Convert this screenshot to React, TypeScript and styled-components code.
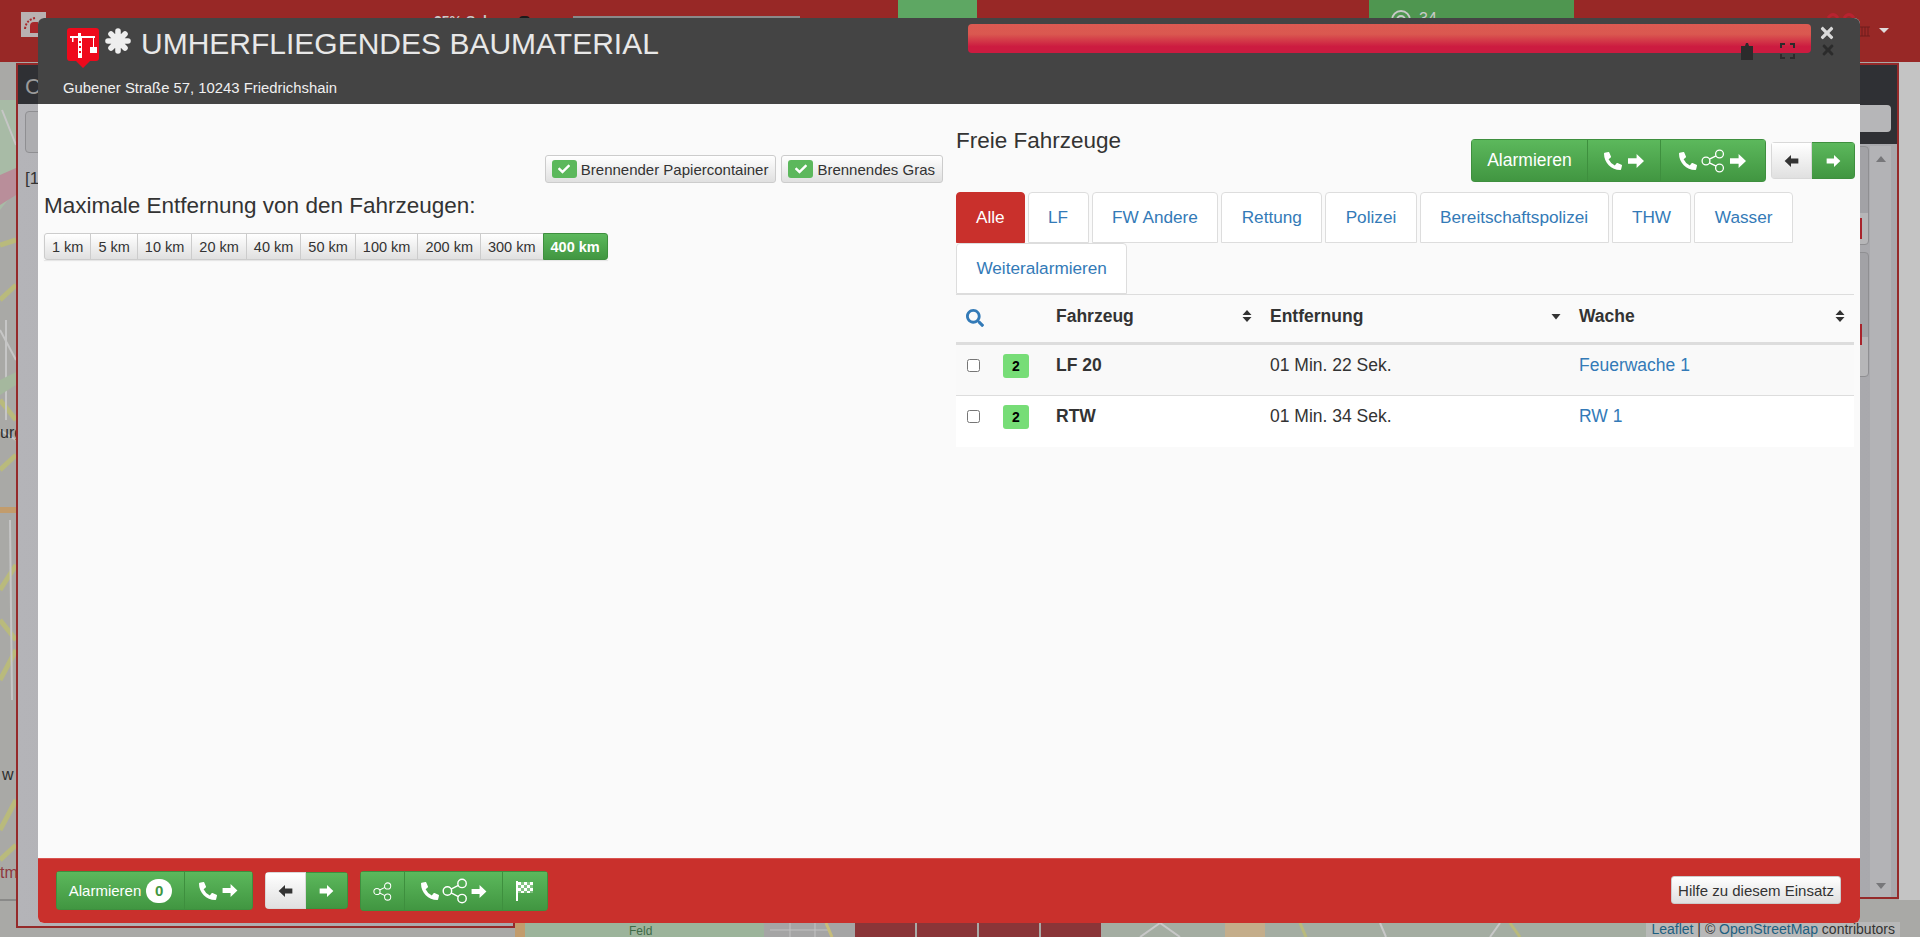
import React from 'react';
import styled, { createGlobalStyle } from 'styled-components';
import { FaCheck, FaPhoneAlt, FaSearch, FaTimes } from 'react-icons/fa';

const GlobalStyle = createGlobalStyle`
  html, body {
    margin: 0;
    padding: 0;
    background: #c4c4c4;
    font-family: "Liberation Sans", Arial, sans-serif;
    font-size: 14px;
    color: #333;
  }
  * { box-sizing: border-box; }
`;

const GREEN = 'linear-gradient(to bottom, #5cb85c 0%, #419641 100%)';
const GREY = 'linear-gradient(to bottom, #ffffff 0%, #e0e0e0 100%)';

const Page = styled.div`
  position: relative;
  width: 1920px;
  height: 937px;
  overflow: hidden;
  background: #c4c4c4;
`;

/* ---- dimmed page behind the modal ---- */
const TopBar = styled.div`
  position: relative;
  z-index: 1;
  display: flex;
  align-items: flex-start;
  height: 62px;
  background: #982826;
`;
const BrandBox = styled.div`
  width: 25px;
  height: 25px;
  margin: 12px 0 0 21px;
  background: #b9b1b1;
  display: flex;
  align-items: center;
  justify-content: center;
`;
const TopText = styled.div`
  margin: 13px 0 0 388px;
  width: 85px;
  font-size: 14px;
  font-weight: 700;
  color: #c9c9c9;
  white-space: nowrap;
`;
const TopRing = styled.div`
  width: 11px;
  height: 16px;
  margin-top: 16px;
  border: 2px solid #1a1a1a;
  border-radius: 4px;
`;
const TopInput = styled.div`
  width: 227px;
  height: 30px;
  margin: 16px 0 0 43px;
  background: #8a8a8a;
`;
const TopGreen = styled.div<{ $ml: number; $w: number; $bg: string }>`
  width: ${(p) => p.$w}px;
  height: 62px;
  margin-left: ${(p) => p.$ml}px;
  background: ${(p) => p.$bg};
  display: flex;
  gap: 8px;
  padding: 10px 0 0 22px;
  color: #c9c9c9;
  font-size: 16px;
`;
const MapLayer = styled.svg`
  position: absolute;
  left: 0;
  top: 0;
  display: block;
`;
const SidePanel = styled.div<{ $left: number; $top: number; $w: number; $h: number }>`
  position: absolute;
  left: ${(p) => p.$left}px;
  top: ${(p) => p.$top}px;
  width: ${(p) => p.$w}px;
  height: ${(p) => p.$h}px;
  border: 2px solid #952a2a;
  background: linear-gradient(to right, #b4b4b8, #a8a8ac);
  overflow: hidden;
`;
const PanelHead = styled.div<{ $h: number }>`
  height: ${(p) => p.$h}px;
  background: #2f3034;
  padding: 9px 7px;
  color: #9a9a9a;
  font-size: 22px;
  display: flex;
  justify-content: space-between;
`;
const PanelButton = styled.div`
  width: 80px;
  height: 42px;
  margin: 7px 0 0 7px;
  border: 1px solid #8f8f92;
  border-radius: 4px;
  background: #adadb0;
`;
const PanelText = styled.div`
  margin: 16px 0 0 7px;
  font-size: 17px;
  color: #333;
`;
const HeadInput = styled.div`
  align-self: flex-end;
  margin-left: auto;
  width: 300px;
  height: 27px;
  margin-bottom: 3px;
  margin-right: -1px;
  border-radius: 4px;
  background: #b6b6b8;
`;
const RightList = styled.div`
  display: flex;
  justify-content: flex-end;
  gap: 1px;
  padding: 2px 6px 0 0;
  height: calc(100% - 79px);
`;
const ListColumn = styled.div`
  width: 120px;
  display: flex;
  flex-direction: column;
  gap: 7px;
`;
const ListCard = styled.div<{ $h: number }>`
  position: relative;
  height: ${(p) => p.$h}px;
  border: 1px solid #8f8f92;
  border-radius: 4px;
  background: linear-gradient(to bottom, #a2a2a6 0 68%, #b6b6b8 68% 100%);
  &::after {
    content: '';
    position: absolute;
    right: 6px;
    top: 71px;
    width: 2px;
    height: 21px;
    background: #a8242c;
  }
`;
const ScrollTrack = styled.div`
  width: 21px;
  background: #b3b3b6;
  display: flex;
  flex-direction: column;
  justify-content: space-between;
  align-items: center;
  padding: 10px 0 8px;
`;
const ScrollArrow = styled.div<{ $down?: boolean }>`
  width: 0;
  height: 0;
  border-left: 5px solid transparent;
  border-right: 5px solid transparent;
  ${(p) => (p.$down ? 'border-top: 6px solid #77777a;' : 'border-bottom: 6px solid #77777a;')}
`;
const MapButtons = styled.div`
  position: absolute;
  left: 855px;
  top: 900px;
  display: flex;
  gap: 2px;
`;
const MapButton = styled.div`
  width: 60px;
  height: 37px;
  background: #8a3538;
`;
const Attribution = styled.div`
  position: absolute;
  right: 20px;
  top: 922px;
  height: 15px;
  padding: 0 5px;
  background: rgba(190, 190, 190, 0.75);
  font-size: 14px;
  line-height: 15px;
  color: #333;
  white-space: nowrap;
  a { color: #1d5f80; text-decoration: none; }
`;

/* ---- modal ---- */
const Modal = styled.div`
  position: absolute;
  left: 38px;
  top: 18px;
  width: 1822px;
  height: 905px;
  z-index: 5;
  display: flex;
  flex-direction: column;
  border-radius: 6px;
  overflow: hidden;
  background: #fafafa;
`;
const Header = styled.div`
  position: relative;
  height: 86px;
  flex: none;
  background: #444444;
  color: #fff;
  padding: 10px 0 0 29px;
`;
const TitleRow = styled.div`
  display: flex;
  align-items: flex-start;
  height: 40px;
`;
const Title = styled.h1`
  margin: -1px 0 0 10px;
  font-size: 30px;
  line-height: 34px;
  font-weight: 400;
  color: #e8e8e8;
  white-space: nowrap;
`;
const Address = styled.div`
  margin: 10px 0 0 -4px;
  font-size: 14.85px;
  line-height: 20px;
  color: #f0f0f0;
`;
const ProgressBar = styled.div`
  position: absolute;
  left: 930px;
  top: 6px;
  width: 843px;
  height: 29px;
  border-radius: 4px;
  background: linear-gradient(to bottom, #dc5a52 0%, #da5850 35%, #cc1b40 78%, #cc1b40 100%);
`;
const HeaderIcon = styled.span<{ $x: number; $y: number; $c: string }>`
  position: absolute;
  left: ${(p) => p.$x}px;
  top: ${(p) => p.$y}px;
  color: ${(p) => p.$c};
  display: flex;
`;
const Body = styled.div`
  flex: 1;
  display: flex;
`;
const LeftColumn = styled.div`
  width: 905px;
  padding: 51px 0 0 6px;
`;
const TagRow = styled.div`
  display: flex;
  justify-content: flex-end;
  gap: 5px;
`;
const TagButton = styled.button`
  height: 28px;
  padding: 0 7px 0 6px;
  display: flex;
  align-items: center;
  gap: 4px;
  border: 1px solid #ccc;
  border-radius: 3px;
  background: ${GREY};
  font: 15px "Liberation Sans", Arial, sans-serif;
  color: #333;
  white-space: nowrap;
`;
const CheckLabel = styled.span`
  width: 25px;
  height: 18px;
  border-radius: 3px;
  background: #5cb85c;
  color: #fff;
  display: flex;
  align-items: center;
  justify-content: center;
  font-size: 12px;
`;
const DistanceHeading = styled.h3`
  margin: 9px 0 0;
  font-size: 22.5px;
  line-height: 28px;
  font-weight: 400;
  color: #333;
`;
const DistanceGroup = styled.div`
  display: inline-flex;
  margin-top: 13px;
  box-shadow: 0 1px 1px rgba(0, 0, 0, 0.08);
`;
const DistanceButton = styled.button<{ $active?: boolean }>`
  height: 27px;
  padding: 0 7px;
  margin-left: -1px;
  border: 1px solid ${(p) => (p.$active ? '#3e8f3e' : '#ccc')};
  background: ${(p) => (p.$active ? GREEN : GREY)};
  color: ${(p) => (p.$active ? '#fff' : '#333')};
  font: ${(p) => (p.$active ? 700 : 400)} 14.5px "Liberation Sans", Arial, sans-serif;
  white-space: nowrap;
  &:first-child { margin-left: 0; border-radius: 3px 0 0 3px; }
  &:last-child { border-radius: 0 3px 3px 0; }
`;
const RightColumn = styled.div`
  width: 898px;
  margin-left: 13px;
`;
const RightHead = styled.div`
  height: 88px;
  display: flex;
  justify-content: space-between;
  align-items: flex-start;
`;
const SectionTitle = styled.h3`
  margin: 24px 0 0;
  font-size: 22.5px;
  line-height: 26px;
  font-weight: 400;
  color: #333;
`;
const Actions = styled.div`
  display: flex;
  gap: 5px;
  align-items: flex-start;
  margin-right: -1px;
`;
const BtnGroup = styled.div<{ $h: number; $mt?: number; $ml?: number }>`
  display: flex;
  height: ${(p) => p.$h}px;
  margin-top: ${(p) => p.$mt ?? 0}px;
  margin-left: ${(p) => p.$ml ?? 0}px;
  border-radius: 4px;
  overflow: hidden;
  flex: none;
`;
const Seg = styled.div<{ $w: number; $light?: boolean; $size?: number; $gap?: number }>`
  width: ${(p) => p.$w}px;
  display: flex;
  align-items: center;
  justify-content: center;
  gap: ${(p) => p.$gap ?? 4}px;
  background: ${(p) => (p.$light ? GREY : GREEN)};
  color: ${(p) => (p.$light ? '#333' : '#fff')};
  font-size: ${(p) => p.$size ?? 16}px;
  border: 1px solid ${(p) => (p.$light ? '#d8d8d8' : '#3e8f3e')};
  border-left-width: 0;
  &:first-child { border-left-width: 1px; }
`;
const CountBadge = styled.span`
  width: 26px;
  height: 24px;
  margin-left: 1px;
  border-radius: 12px;
  background: #fff;
  color: #419641;
  font-weight: 700;
  font-size: 15px;
  display: flex;
  align-items: center;
  justify-content: center;
`;
const Tabs = styled.ul`
  list-style: none;
  margin: 0 0 -1px;
  padding: 0;
  display: flex;
  flex-wrap: wrap;
  column-gap: 3px;
  border-bottom: 1px solid #ddd;
`;
const Tab = styled.li<{ $active?: boolean }>`
  height: 51px;
  padding: 0 ${(p) => (p.$active ? 19 : 19.4)}px;
  line-height: 49px;
  font-size: 17.2px;
  border: 1px solid ${(p) => (p.$active ? '#c9302c' : '#ddd')};
  border-radius: 4px 4px 0 0;
  background: ${(p) => (p.$active ? '#c9302c' : '#fff')};
  color: ${(p) => (p.$active ? '#fff' : '#337ab7')};
  white-space: nowrap;
`;
const Table = styled.table`
  width: 898px;
  table-layout: fixed;
  border-collapse: collapse;
  font-size: 17.5px;
`;
const Th = styled.th<{ $pl?: number }>`
  height: 49px;
  padding: 0 9px 0 ${(p) => p.$pl ?? 9}px;
  border-bottom: 3px solid #ddd;
  text-align: left;
  font-weight: 700;
  color: #333;
`;
const ThInner = styled.div`
  display: flex;
  align-items: center;
  justify-content: space-between;
  margin-top: -3px;
`;
const Row = styled.tr<{ $stripe?: boolean }>`
  height: 52px;
  background: ${(p) => (p.$stripe ? '#f9f9f9' : '#fff')};
  border-bottom: ${(p) => (p.$stripe ? '1px solid #ddd' : 'none')};
`;
const Td = styled.td<{ $pl?: number; $bold?: boolean }>`
  padding: 9px 4px 0 ${(p) => p.$pl ?? 9}px;
  vertical-align: top;
  line-height: 23px;
  font-weight: ${(p) => (p.$bold ? 700 : 400)};
  color: #333;
`;
const RowCheck = styled.input`
  display: block;
  width: 13px;
  height: 13px;
  margin: 5px 0 0;
`;
const Badge = styled.span`
  display: block;
  width: 26px;
  height: 24px;
  margin-top: 0;
  border-radius: 3px;
  background: #77dd77;
  color: #000;
  font-size: 14px;
  font-weight: 700;
  line-height: 24px;
  text-align: center;
`;
const RowLink = styled.a`
  color: #337ab7;
  text-decoration: none;
`;
const SearchLink = styled.span`
  display: flex;
  color: #337ab7;
  font-size: 18px;
  padding-left: 1px;
`;
const Footer = styled.div`
  height: 65px;
  flex: none;
  background: #c9302c;
  border-top: 1px solid #d9534f;
  display: flex;
  align-items: flex-start;
  padding: 12px 0 0 18px;
`;
const HelpButton = styled.button`
  height: 28px;
  width: 170px;
  margin: 5px 19px 0 auto;
  padding: 0;
  border: 1px solid #ccc;
  border-radius: 3px;
  background: ${GREY};
  font: 15px "Liberation Sans", Arial, sans-serif;
  color: #333;
`;

/* ---- drawings ---- */
const Arrow = ({ w, h, left }: { w: number; h: number; left?: boolean }) => (
  <svg width={w} height={h} viewBox="0 0 16 14" style={{ display: 'block', transform: left ? 'scaleX(-1)' : undefined }}>
    <path d="M8.6 0 L16 7 L8.6 14 L8.6 9.8 L0 9.8 L0 4.2 L8.6 4.2 Z" fill="currentColor" />
  </svg>
);

const Share = ({ size }: { size: number }) => (
  <svg width={size} height={size} viewBox="0 0 24 24" fill="none" stroke="currentColor" strokeWidth="1.3" style={{ display: 'block' }}>
    <circle cx="5" cy="12" r="3.9" />
    <circle cx="18.5" cy="5" r="3.9" />
    <circle cx="18.5" cy="19" r="3.9" />
    <path d="M8.4 10.2 L15.1 6.8 M8.4 13.8 L15.1 17.2" />
  </svg>
);

const CheckerFlag = () => (
  <svg width="18" height="20" viewBox="0 0 18 20" style={{ display: 'block' }}>
    <rect x="0" y="0" width="2" height="20" fill="#fff" />
    <rect x="2" y="1" width="15" height="11" fill="#dff0df" fillOpacity="0.35" />
    <path fill="#fff" d="M2 1h3v3h-3z M8 1h3v3h-3z M14 1h3v3h-3z M5 4h3v3h-3z M11 4h3v3h-3z M2 7h3v3h-3z M8 7h3v3h-3z M14 7h3v3h-3z M5 10h3v2h-3z M11 10h3v2h-3z" />
  </svg>
);

const Asterisk = () => (
  <svg width="26" height="26" viewBox="0 0 26 26" stroke="#eeeeee" strokeWidth="5.6" strokeLinecap="round" style={{ display: 'block' }}>
    <path d="M13 3 V23 M3 13 H23 M6 6 L20 20 M20 6 L6 20" />
  </svg>
);

const CraneLogo = () => (
  <svg width="32" height="40" viewBox="0 0 32 40" style={{ display: 'block', flex: 'none' }}>
    <path d="M3 0 H29 Q32 0 32 3 V30 Q32 33 29 33 H23 L16 40 L9 33 H3 Q0 33 0 30 V3 Q0 0 3 0 Z" fill="#ee0a1c" />
    <path d="M3 8 H28 V10 H3 Z M11 5 H14 V8 H11 Z M11 10 H15 V30 H11 Z M5 10 H6.5 V14 H5 Z M26 10 H27 V19 H26 Z" fill="#fff" />
    <path d="M12 13 h2 v2 h-2 z M12 18 h2 v2 h-2 z M12 23 h2 v2 h-2 z" fill="#ee0a1c" />
    <rect x="23" y="19" width="7" height="6" fill="#fff" />
  </svg>
);

const SortBoth = () => (
  <svg width="10" height="12" viewBox="0 0 10 12" style={{ display: 'block' }}>
    <path d="M5 0 L9.5 5 H0.5 Z M0.5 7 H9.5 L5 12 Z" fill="#333" />
  </svg>
);
const SortDown = () => (
  <svg width="10" height="12" viewBox="0 0 10 12" style={{ display: 'block' }}>
    <path d="M0.5 4 H9.5 L5 9.5 Z" fill="#333" />
  </svg>
);

const Fullscreen = () => (
  <svg width="15" height="16" viewBox="0 0 15 16" fill="none" stroke="#2b2b2b" strokeWidth="2" style={{ display: 'block' }}>
    <path d="M5 1 H1 V5 M10 1 H14 V5 M5 15 H1 V11 M10 15 H14 V11" />
  </svg>
);

const Clipboard = () => (
  <svg width="12" height="17" viewBox="0 0 12 17" style={{ display: 'block' }}>
    <path d="M0 3 H4 L5 0 H7 L8 3 H12 V17 H0 Z" fill="#2b2b2b" />
  </svg>
);

const TopRightBits = () => (
  <svg width="62" height="30" viewBox="0 0 62 30" fill="none" style={{ display: 'block', marginLeft: 253, marginTop: 10 }}>
    <path d="M1 8 Q6 1 11 8 M17 8 Q22 1 27 8" stroke="#b82330" strokeWidth="3" />
    <path d="M33 17 H43 M33 26 H43 M35 17 V26 M38 17 V26 M41 17 V26" stroke="#6e1c1c" strokeWidth="1" />
    <path d="M52 18 H62 L57 23 Z" fill="#e0dcdc" />
  </svg>
);

const BrandMark = () => (
  <svg width="19" height="17" viewBox="0 0 19 17" fill="none">
    <path d="M6 17 V10 Q6 6 10 6 H13 Q17 6 17 10 V17 Z" fill="#a8282b" />
    <path d="M1 13 Q2 4 11 2" stroke="#a8282b" strokeWidth="2" strokeDasharray="2 1.5" />
  </svg>
);

const MapDrawing = () => (
  <MapLayer width="1920" height="937" viewBox="0 0 1920 937">
    <rect width="1920" height="937" fill="#a9a9a6" />
    <path d="M0 100 H16 V190 L0 210 Z" fill="#a8bba6" />
    <path d="M0 175 L16 168 V195 L0 205 Z" fill="#b98e9a" />
    <path d="M0 245 L16 240 M0 300 L16 285 M0 400 L16 420 M0 470 L16 455 M0 590 L16 565 M0 620 L16 640 M0 680 L16 650 M0 830 L16 800 M0 860 L16 845" stroke="#b9ba7c" strokeWidth="5" fill="none" />
    <path d="M0 510 H16" stroke="#c29c6c" strokeWidth="6" />
    <path d="M2 110 L16 145 M0 330 L16 360 M6 320 L6 420 M0 430 L16 440 M10 520 L12 700" stroke="#c6c6c6" strokeWidth="2" fill="none" />
    <path d="M0 380 L16 372 V385 L0 395 Z" fill="#a5b89e" />
    <path d="M0 900 H16" stroke="#6a6a6a" strokeWidth="1" />
    <path d="M515 923 H855 V937 H515 Z" fill="#9cb49b" />
    <path d="M515 923 H525 V937 H515 Z" fill="#c29c6c" />
    <path d="M764 923 H855 V937 H764 Z" fill="#a5a5a5" />
    <path d="M790 923 V937 M815 923 V937 M770 930 H830" stroke="#c2c2c2" strokeWidth="1" />
    <path d="M826 923 L832 937" stroke="#c7bd7a" strokeWidth="3" />
    <path d="M1102 923 H1660 V937 H1102 Z" fill="#a4ada2" />
    <path d="M1140 937 L1160 923 L1180 937 M1240 923 L1255 937 M1380 923 L1386 937 M1500 923 L1490 937" stroke="#c8c8c8" strokeWidth="2" fill="none" />
    <path d="M1300 923 L1306 937 M1510 923 L1520 937" stroke="#b9ba7c" strokeWidth="3" fill="none" />
    <path d="M1225 923 H1265 V937 H1225 Z" fill="#c4ad8a" />
    <text x="0" y="438" fontFamily="Liberation Sans" fontSize="16" fill="#2e2e2e">urg</text>
    <text x="2" y="780" fontFamily="Liberation Sans" fontSize="16" fill="#2e2e2e">w</text>
    <text x="0" y="878" fontFamily="Liberation Sans" fontSize="16" fill="#8f3a40">tm</text>
    <text x="629" y="935" fontFamily="Liberation Sans" fontSize="12" fill="#3f6a47">Feld</text>
    <rect x="1899" y="0" width="21" height="900" fill="#c4c4c4" />
  </MapLayer>
);

const tabs = ['Alle', 'LF', 'FW Andere', 'Rettung', 'Polizei', 'Bereitschaftspolizei', 'THW', 'Wasser', 'Weiteralarmieren'];
const distances = ['1 km', '5 km', '10 km', '20 km', '40 km', '50 km', '100 km', '200 km', '300 km', '400 km'];
const vehicles = [
  { name: 'LF 20', time: '01 Min. 22 Sek.', station: 'Feuerwache 1' },
  { name: 'RTW', time: '01 Min. 34 Sek.', station: 'RW 1' },
];

const App = () => (
  <Page>
    <GlobalStyle />
    <MapDrawing />
    <TopBar>
      <BrandBox>
        <BrandMark />
      </BrandBox>
      <TopText>25% Sek</TopText>
      <TopRing />
      <TopInput />
      <TopGreen $ml={98} $w={79} $bg="#5ea763" />
      <TopGreen $ml={392} $w={205} $bg="#4f9650">
        <svg width="20" height="20" viewBox="0 0 20 20" fill="none" stroke="#c9c9c9" strokeWidth="2">
          <circle cx="10" cy="10" r="9" />
          <circle cx="10" cy="10" r="4" />
        </svg>
        34
      </TopGreen>
      <TopRightBits />
    </TopBar>

    <SidePanel $left={16} $top={63} $w={499} $h={865}>
      <PanelHead $h={39}>C</PanelHead>
      <PanelButton />
      <PanelText>[1</PanelText>
    </SidePanel>
    <SidePanel $left={1500} $top={63} $w={399} $h={836}>
      <PanelHead $h={79}>
        <HeadInput />
      </PanelHead>
      <RightList>
        <ListColumn>
          <ListCard $h={99} />
          <ListCard $h={125} />
        </ListColumn>
        <ScrollTrack>
          <ScrollArrow />
          <ScrollArrow $down />
        </ScrollTrack>
      </RightList>
    </SidePanel>

    <MapButtons>
      <MapButton />
      <MapButton />
      <MapButton />
      <MapButton />
    </MapButtons>
    <Attribution>
      <a>Leaflet</a> | © <a>OpenStreetMap</a> contributors
    </Attribution>

    <Modal>
      <Header>
        <TitleRow>
          <CraneLogo />
          <span style={{ width: 6 }} />
          <Asterisk />
          <Title>UMHERFLIEGENDES BAUMATERIAL</Title>
        </TitleRow>
        <Address>Gubener Straße 57, 10243 Friedrichshain</Address>
        <ProgressBar />
        <HeaderIcon $x={1703} $y={25} $c="#2b2b2b">
          <Clipboard />
        </HeaderIcon>
        <HeaderIcon $x={1742} $y={25} $c="#2b2b2b">
          <Fullscreen />
        </HeaderIcon>
        <HeaderIcon $x={1780} $y={6} $c="#d9d9d9">
          <FaTimes size={18} />
        </HeaderIcon>
        <HeaderIcon $x={1782} $y={24} $c="#2b2b2b">
          <FaTimes size={16} />
        </HeaderIcon>
      </Header>

      <Body>
        <LeftColumn>
          <TagRow>
            <TagButton>
              <CheckLabel>
                <FaCheck />
              </CheckLabel>
              Brennender Papiercontainer
            </TagButton>
            <TagButton>
              <CheckLabel>
                <FaCheck />
              </CheckLabel>
              Brennendes Gras
            </TagButton>
          </TagRow>
          <DistanceHeading>Maximale Entfernung von den Fahrzeugen:</DistanceHeading>
          <DistanceGroup>
            {distances.map((d) => (
              <DistanceButton key={d} $active={d === '400 km'}>
                {d}
              </DistanceButton>
            ))}
          </DistanceGroup>
        </LeftColumn>

        <RightColumn>
          <RightHead>
            <SectionTitle>Freie Fahrzeuge</SectionTitle>
            <Actions>
              <BtnGroup $h={43} $mt={35}>
                <Seg $w={117} $size={17.5}>
                  Alarmieren
                </Seg>
                <Seg $w={73} $gap={5}>
                  <FaPhoneAlt size={18} />
                  <Arrow w={18} h={14} />
                </Seg>
                <Seg $w={105}>
                  <FaPhoneAlt size={18} />
                  <Share size={24} />
                  <Arrow w={18} h={14} />
                </Seg>
              </BtnGroup>
              <BtnGroup $h={37} $mt={38}>
                <Seg $w={41} $light>
                  <Arrow w={15} h={12} left />
                </Seg>
                <Seg $w={43}>
                  <Arrow w={15} h={12} />
                </Seg>
              </BtnGroup>
            </Actions>
          </RightHead>

          <Tabs>
            {tabs.map((t) => (
              <Tab key={t} $active={t === 'Alle'}>
                {t}
              </Tab>
            ))}
          </Tabs>

          <Table>
            <colgroup>
              <col style={{ width: 43 }} />
              <col style={{ width: 47 }} />
              <col style={{ width: 215 }} />
              <col style={{ width: 309 }} />
              <col style={{ width: 284 }} />
            </colgroup>
            <thead>
              <tr>
                <Th colSpan={2}>
                  <SearchLink>
                    <FaSearch />
                  </SearchLink>
                </Th>
                <Th $pl={10}>
                  <ThInner>
                    Fahrzeug
                    <SortBoth />
                  </ThInner>
                </Th>
                <Th>
                  <ThInner>
                    Entfernung
                    <SortDown />
                  </ThInner>
                </Th>
                <Th>
                  <ThInner>
                    Wache
                    <SortBoth />
                  </ThInner>
                </Th>
              </tr>
            </thead>
            <tbody>
              {vehicles.map((v, i) => (
                <Row key={v.name} $stripe={i === 0}>
                  <Td $pl={11}>
                    <RowCheck type="checkbox" />
                  </Td>
                  <Td $pl={4}>
                    <Badge>2</Badge>
                  </Td>
                  <Td $bold $pl={10}>
                    {v.name}
                  </Td>
                  <Td>{v.time}</Td>
                  <Td>
                    <RowLink>{v.station}</RowLink>
                  </Td>
                </Row>
              ))}
            </tbody>
          </Table>
        </RightColumn>
      </Body>

      <Footer>
        <BtnGroup $h={39}>
          <Seg $w={129} $size={15}>
            Alarmieren
            <CountBadge>0</CountBadge>
          </Seg>
          <Seg $w={68} $gap={5}>
            <FaPhoneAlt size={18} />
            <Arrow w={16} h={13} />
          </Seg>
        </BtnGroup>
        <BtnGroup $h={37} $mt={1} $ml={12}>
          <Seg $w={41} $light>
            <Arrow w={15} h={12} left />
          </Seg>
          <Seg $w={42}>
            <Arrow w={15} h={12} />
          </Seg>
        </BtnGroup>
        <BtnGroup $h={40} $ml={12}>
          <Seg $w={45}>
            <Share size={19} />
          </Seg>
          <Seg $w={98} $gap={3}>
            <FaPhoneAlt size={18} />
            <Share size={26} />
            <Arrow w={16} h={13} />
          </Seg>
          <Seg $w={45}>
            <CheckerFlag />
          </Seg>
        </BtnGroup>
        <HelpButton>Hilfe zu diesem Einsatz</HelpButton>
      </Footer>
    </Modal>
  </Page>
);

export default App;
